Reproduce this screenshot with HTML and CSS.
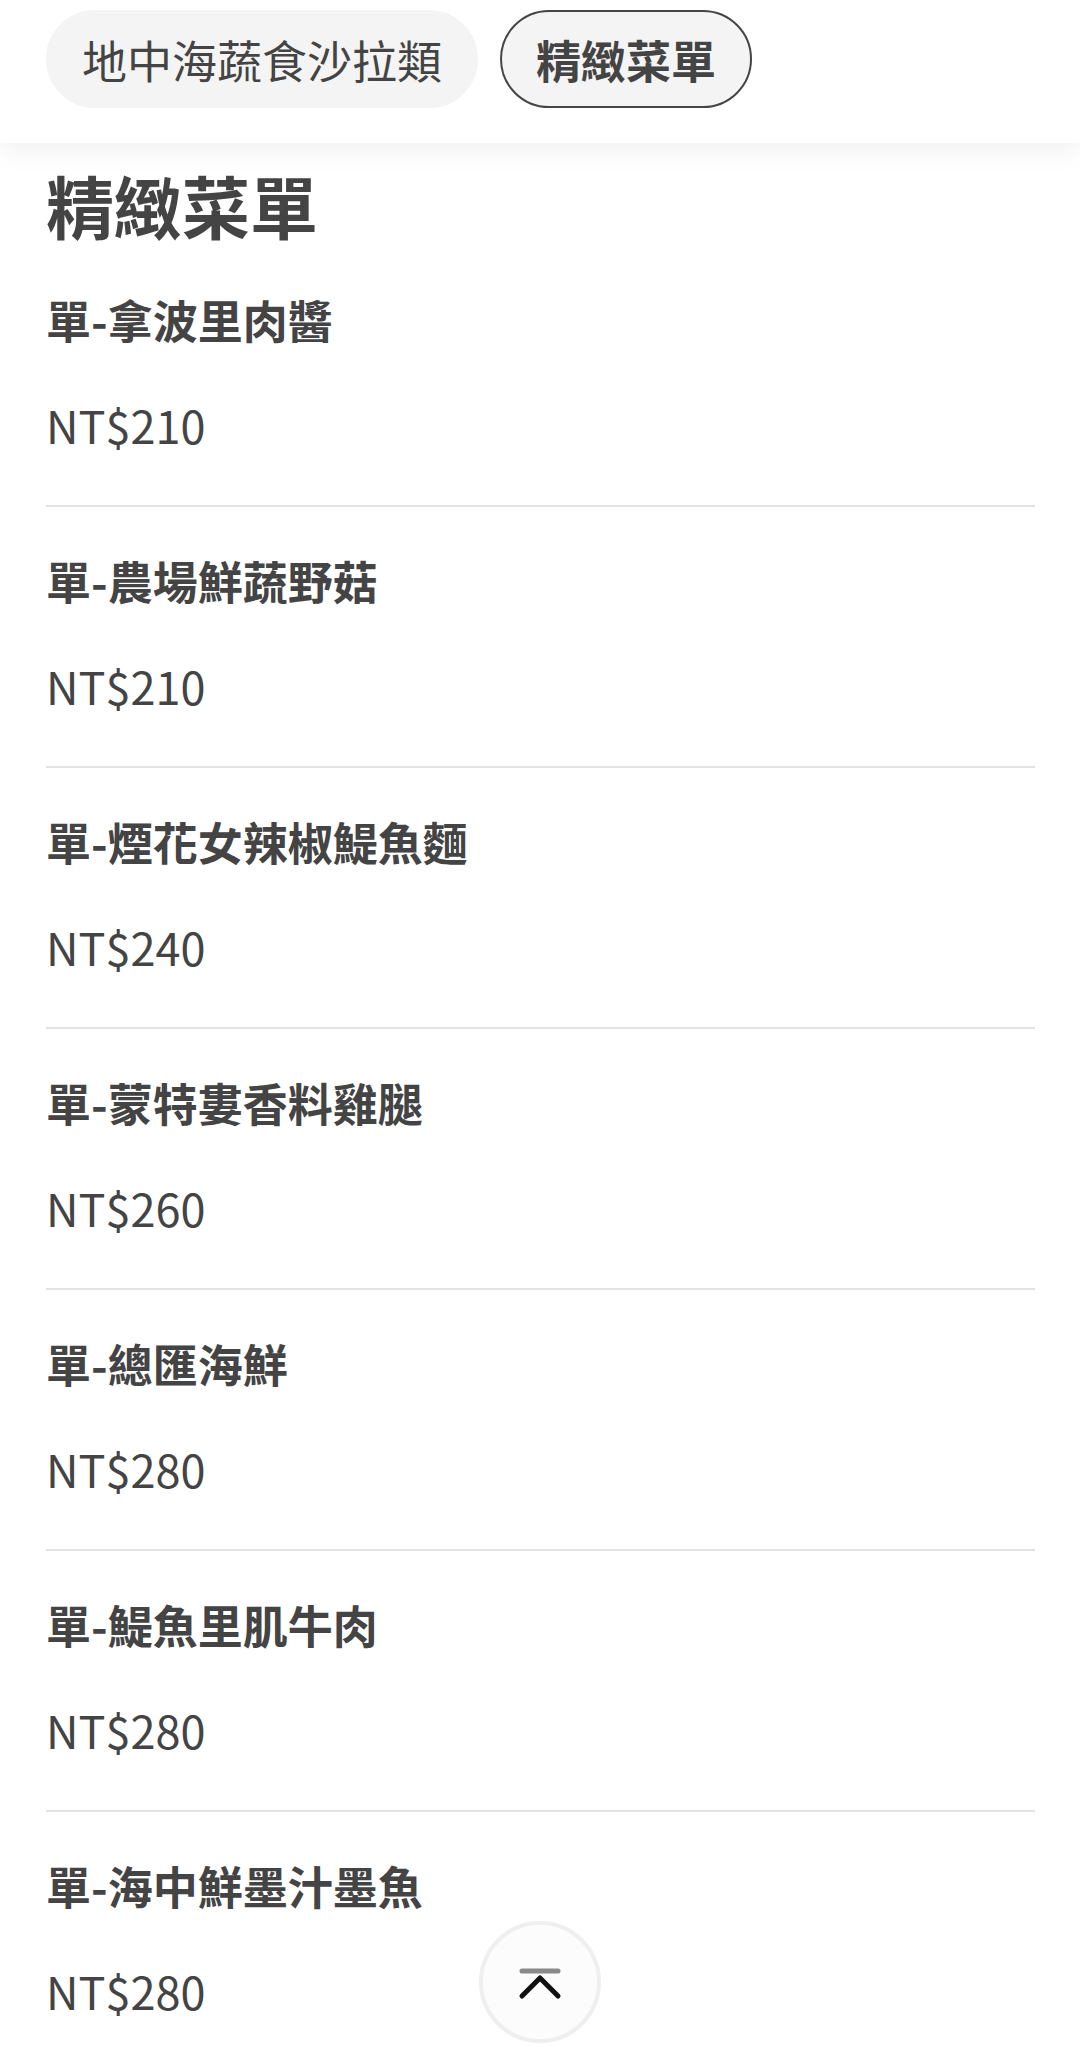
FILE: index.html
```html
<!DOCTYPE html>
<html lang="zh-Hant">
<head>
    <meta charset="UTF-8">
    <meta name="viewport" content="width=device-width, initial-scale=1.0">
    <title>精緻菜單</title>
    <link rel="stylesheet" href="styles.css">
</head>
<body>
<header class="category-bar">
    <button class="category-pill">地中海蔬食沙拉類</button>
    <button class="category-pill active">精緻菜單</button>
</header>
<main class="menu">
    <h2 class="menu-title">精緻菜單</h2>
    <ul class="menu-list">
        <li class="menu-item">
            <div class="item-name">單-拿波里肉醬</div>
            <div class="item-price">NT$210</div>
        </li>
        <li class="menu-item">
            <div class="item-name">單-農場鮮蔬野菇</div>
            <div class="item-price">NT$210</div>
        </li>
        <li class="menu-item">
            <div class="item-name">單-煙花女辣椒鯷魚麵</div>
            <div class="item-price">NT$240</div>
        </li>
        <li class="menu-item">
            <div class="item-name">單-蒙特婁香料雞腿</div>
            <div class="item-price">NT$260</div>
        </li>
        <li class="menu-item">
            <div class="item-name">單-總匯海鮮</div>
            <div class="item-price">NT$280</div>
        </li>
        <li class="menu-item">
            <div class="item-name">單-鯷魚里肌牛肉</div>
            <div class="item-price">NT$280</div>
        </li>
        <li class="menu-item">
            <div class="item-name">單-海中鮮墨汁墨魚</div>
            <div class="item-price">NT$280</div>
        </li>
    </ul>
</main>
<button class="back-to-top" aria-label="回到頂端">
    <svg width="44" height="36" viewBox="0 0 44 36">
        <line x1="4" y1="4" x2="40" y2="4" stroke="#8a8a8a" stroke-width="5" stroke-linecap="round"/>
        <polyline points="4,29 22,11 40,29" fill="none" stroke="#111" stroke-width="5" stroke-linecap="round" stroke-linejoin="round"/>
    </svg>
</button>
</body>
</html>
```

FILE: styles.css
```css
body {
    margin: 0;
    padding: 0;
    background: #ffffff;
    color: #444444;
    font-family: 'Noto Sans CJK TC', 'Noto Sans', sans-serif;
}
.category-bar {
    display: flex;
    gap: 22px;
    height: 143px;
    box-sizing: border-box;
    padding: 10px 46px 0;
    background: #ffffff;
    box-shadow: 0 10px 24px rgba(0, 0, 0, 0.05);
    position: relative;
}
.category-pill {
    height: 98px;
    padding: 0 34px;
    border: 2px solid #f4f4f4;
    border-radius: 49px;
    background: #f4f4f4;
    color: #444444;
    font-family: inherit;
    font-size: 45px;
    font-weight: 400;
    line-height: 1;
}
.category-pill.active {
    border-color: #444444;
    font-weight: 700;
}
.menu {
    padding: 0 45px 0 46px;
}
.menu-title {
    margin: 24px 0 0;
    font-size: 68px;
    line-height: 76px;
    font-weight: 700;
}
.menu-list {
    list-style-type: none;
    margin: 0;
    padding: 3px 0 0;
}
.menu-item {
    padding: 44px 0 47px;
    border-bottom: 2px solid #e2e2e2;
}
.item-name {
    font-size: 45px;
    line-height: 60px;
    font-weight: 700;
}
.item-price {
    margin-top: 42px;
    font-size: 45px;
    line-height: 66px;
    font-weight: 400;
}
.back-to-top {
    position: fixed;
    left: 479px;
    bottom: 4px;
    width: 122px;
    height: 122px;
    border-radius: 50%;
    border: 4px solid #efefef;
    background: #fcfcfc;
    display: flex;
    align-items: center;
    justify-content: center;
    padding: 0;
}
.back-to-top svg {
    display: block;
    margin-top: 6px;
}
```
